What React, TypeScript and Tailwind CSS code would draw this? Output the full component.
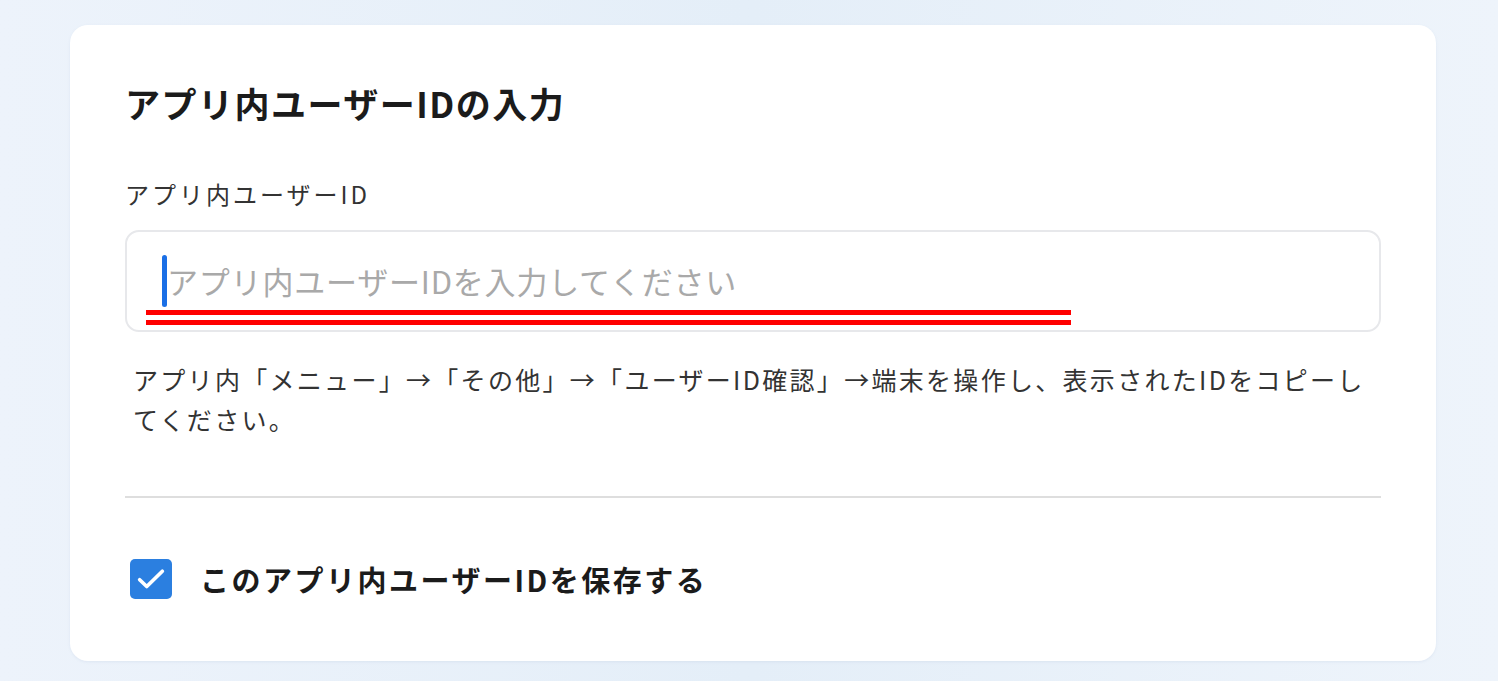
const jp = { fontFamily: '"Noto Sans CJK JP", "Noto Sans", sans-serif' };

function CheckIcon() {
  return (
    <svg viewBox="0 0 24 24" className="h-[34px] w-[34px]" fill="none" stroke="white" strokeWidth={2.6} strokeLinecap="round" strokeLinejoin="round">
      <path d="M4 12.5l5 4.8L20 6.5" />
    </svg>
  );
}

export default function App() {
  return (
    <div
      style={jp}
      className="min-h-[681px] w-full bg-linear-to-r from-[#edf3fb] via-[#e4eef8] to-[#eef4fb] pt-[25px] pr-[62px] pb-[20px] pl-[70px]"
    >
      <div className="rounded-[18px] bg-white px-[55px] pt-[54px] pb-[62px] shadow-[0_1px_3px_rgba(120,150,190,0.12)]">
        <h1 className="text-[35px] font-bold leading-[48px] tracking-[1.5px] text-[#1b1b1b]">
          アプリ内ユーザーIDの入力
        </h1>

        <label className="mt-[50px] block text-[24px] leading-[33px] tracking-[3px] text-[#333]">
          アプリ内ユーザーID
        </label>

        <div className="relative mt-[20px] flex h-[102px] items-center rounded-[14px] border-2 border-[#e7e8eb] pl-[35px] pr-4">
          <span className="h-[52px] w-[5px] shrink-0 rounded-full bg-[#1a6fe6]" />
          <input
            readOnly
            placeholder="アプリ内ユーザーIDを入力してください"
            className="min-w-0 flex-1 bg-transparent text-[31px] tracking-[0.8px] text-[#222] outline-none placeholder:text-[#a9a9a9]"
          />
          {/* annotation: red double underline */}
          <div className="absolute top-[78px] left-[19px] h-[5px] w-[925px] bg-[#ff0000]" />
          <div className="absolute top-[88px] left-[19px] h-[5px] w-[925px] bg-[#ff0000]" />
        </div>

        <p className="mt-[27px] pl-[8px] text-[25px] leading-[40px] tracking-[2.3px] text-[#333]">
          アプリ内「メニュー」→「その他」→「ユーザーID確認」→端末を操作し、表示されたIDをコピーしてください。
        </p>

        <div className="mt-[57px] h-[2px] bg-[#dedede]" />

        <div className="mt-[61px] flex items-center gap-[28px] pl-[5px]">
          <span className="flex h-[40px] w-[42px] items-center justify-center rounded-[5px] bg-[#2b7fe0]">
            <CheckIcon />
          </span>
          <span className="text-[29px] font-bold leading-[40px] tracking-[2.5px] text-[#1b1b1b]">
            このアプリ内ユーザーIDを保存する
          </span>
        </div>
      </div>
    </div>
  );
}
